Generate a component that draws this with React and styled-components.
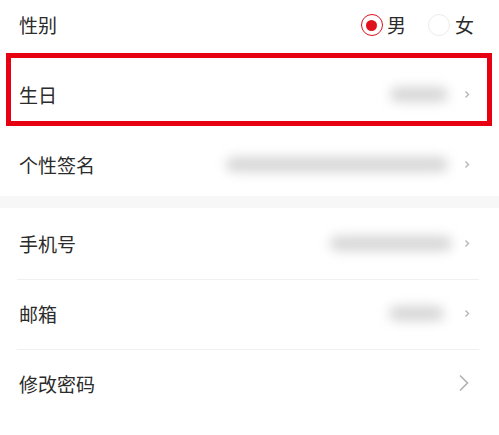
import React from "react";
import styled, { createGlobalStyle } from "styled-components";

const Global = createGlobalStyle`
  html, body { margin: 0; padding: 0; background: #ffffff; }
  body { font-family: "Noto Sans CJK SC", "Noto Sans", sans-serif; overflow: hidden; }
`;

const Page = styled.div`
  width: 499px;
  height: 435px;
  overflow: hidden;
  background: #fff;
  display: flex;
  flex-direction: column;
  margin-top: -11px;
`;

const Group = styled.div`
  display: flex;
  flex-direction: column;
`;

const Row = styled.div`
  position: relative;
  height: 70px;
  flex-shrink: 0;
  display: flex;
  align-items: center;
  padding: 0 ${(p) => p.$pr || 29}px 0 19px;
  box-sizing: border-box;
  &::after {
    content: "";
    display: ${(p) => (p.$line ? "block" : "none")};
    position: absolute;
    left: 17px;
    right: 20px;
    bottom: -2px;
    height: 1px;
    background: #f0f0f0;
  }
`;

const Label = styled.span`
  flex: 1;
  font-size: 19px;
  color: #2b2b2b;
  line-height: 1;
`;

const Blur = styled.span`
  display: block;
  width: ${(p) => p.$w}px;
  height: 15px;
  border-radius: 8px;
  background: #d6d6d6;
  filter: blur(6px);
  margin-right: ${(p) => p.$mr || 14}px;
`;

const Chevron = ({ size = "s" }) =>
  size === "s" ? (
    <svg width="6" height="9" viewBox="0 0 6 9">
      <path d="M1.5 1.5 L4.5 4.5 L1.5 7.5" fill="none" stroke="#b5b5b5" strokeWidth="1.4" />
    </svg>
  ) : (
    <svg width="12" height="18" viewBox="0 0 12 18">
      <path d="M2 1.5 L9.5 9 L2 16.5" fill="none" stroke="#b0b0b0" strokeWidth="1.6" />
    </svg>
  );

const RadioGroup = styled.div`
  display: flex;
  align-items: center;
`;

const RadioItem = styled.label`
  display: flex;
  align-items: center;
  gap: ${(p) => p.$gap || 4}px;
  margin-left: ${(p) => p.$ml || 0}px;
  font-size: 19px;
  color: #2b2b2b;
  line-height: 1;
`;

const RadioCircle = styled.span`
  width: 22px;
  height: 22px;
  box-sizing: border-box;
  border-radius: 50%;
  border: 1.5px solid ${(p) => (p.$on ? "#e0101c" : "#ececec")};
  display: flex;
  align-items: center;
  justify-content: center;
  margin-top: 2px;
  &::before {
    content: "";
    display: ${(p) => (p.$on ? "block" : "none")};
    width: 11px;
    height: 11px;
    border-radius: 50%;
    background: #e0101c;
  }
`;

const Highlight = styled.div`
  position: absolute;
  left: 6px;
  right: 7px;
  top: -6px;
  bottom: 3px;
  border: 5px solid #e60012;
  pointer-events: none;
`;

const Gap = styled.div`
  height: 12px;
  background: #f7f7f7;
  flex-shrink: 0;
  margin-top: -3px;
`;

export default function App() {
  return (
    <>
      <Global />
      <Page>
        <Group>
          <Row $pr={25}>
            <Label>性别</Label>
            <RadioGroup>
              <RadioItem>
                <RadioCircle $on />男
              </RadioItem>
              <RadioItem $ml={22} $gap={5}>
                <RadioCircle />女
              </RadioItem>
            </RadioGroup>
          </Row>
          <Row>
            <Label>生日</Label>
            <Blur $w={58} $mr={16} />
            <Chevron />
            <Highlight />
          </Row>
          <Row>
            <Label>个性签名</Label>
            <Blur $w={222} $mr={16} />
            <Chevron />
          </Row>
        </Group>
        <Gap />
        <Group>
          <Row $line>
            <Label>手机号</Label>
            <Blur $w={122} $mr={12} />
            <Chevron />
          </Row>
          <Row $line>
            <Label>邮箱</Label>
            <Blur $w={55} $mr={20} />
            <Chevron />
          </Row>
          <Row>
            <Label>修改密码</Label>
            <Chevron size="l" />
          </Row>
        </Group>
      </Page>
    </>
  );
}
